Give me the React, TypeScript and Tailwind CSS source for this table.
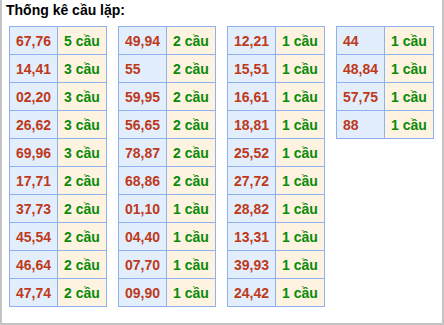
const columns: [string, number][][] = [
  [
    ["67,76", 5],
    ["14,41", 3],
    ["02,20", 3],
    ["26,62", 3],
    ["69,96", 3],
    ["17,71", 2],
    ["37,73", 2],
    ["45,54", 2],
    ["46,64", 2],
    ["47,74", 2],
  ],
  [
    ["49,94", 2],
    ["55", 2],
    ["59,95", 2],
    ["56,65", 2],
    ["78,87", 2],
    ["68,86", 2],
    ["01,10", 1],
    ["04,40", 1],
    ["07,70", 1],
    ["09,90", 1],
  ],
  [
    ["12,21", 1],
    ["15,51", 1],
    ["16,61", 1],
    ["18,81", 1],
    ["25,52", 1],
    ["27,72", 1],
    ["28,82", 1],
    ["13,31", 1],
    ["39,93", 1],
    ["24,42", 1],
  ],
  [
    ["44", 1],
    ["48,84", 1],
    ["57,75", 1],
    ["88", 1],
  ],
];

export default function App() {
  return (
    <div className="w-[444px] h-[325px] border-x-2 border-b-2 border-[#c4c4c4] bg-white font-['Liberation_Sans',Arial,sans-serif] overflow-hidden">
      <div className="pl-[4px] pt-[2px] h-[26px] text-[14px] leading-[16px] font-bold text-black">
        Thống kê cầu lặp:
      </div>

      <div className="flex items-start gap-[11px] pl-[7px]">
        {columns.map((rows, i) => (
          <table key={i} className="border-collapse w-[98px] table-fixed">
            <tbody>
              {rows.map(([pair, count]) => (
                <tr key={pair} className="h-[28px]">
                  <td className="w-[48px] border border-[#8fb2ee] bg-[#e3eefd] pl-[6px] text-[14px] font-bold text-[#bd3a1b] leading-none">
                    {pair}
                  </td>
                  <td className="border border-[#8fb2ee] bg-[#fef3e1] pl-[6px] text-[14px] font-bold text-[#0a8a0a] leading-none">
                    {count} cầu
                  </td>
                </tr>
              ))}
            </tbody>
          </table>
        ))}
      </div>
    </div>
  );
}
